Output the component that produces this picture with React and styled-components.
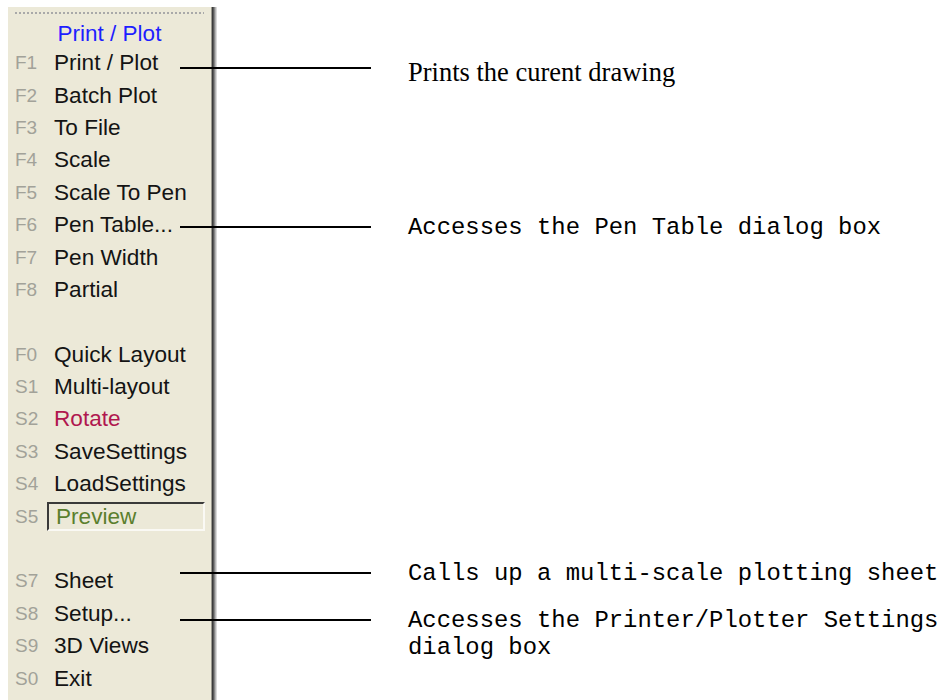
import React from 'react';
import styled, { createGlobalStyle } from 'styled-components';

const GlobalStyle = createGlobalStyle`
  html, body {
    margin: 0;
    padding: 0;
    background: #ffffff;
  }
`;

const Page = styled.div`
  position: relative;
  box-sizing: border-box;
  width: 940px;
  height: 700px;
  padding: 7px 0 0 8px;
  display: flex;
  flex-direction: column;
  overflow: hidden;
  background: #ffffff;
`;

const Panel = styled.div`
  flex: 1;
  width: 203px;
  padding-top: 5px;
  background: #ece9d8;
  border-right: 1px solid #9c9a90;
  box-shadow: 1px 0 0 #3c3c3c, 2px 0 0 #5a5a5a, 3px 0 0 #868686,
    4px 0 0 #b4b4b4, 5px 0 0 #dadada;
  font-family: "Liberation Sans", Arial, sans-serif;
`;

const Grip = styled.div`
  margin: 0 7px;
  height: 2px;
  background: repeating-linear-gradient(90deg, #a9a9a9 0 2px, transparent 2px 4px);
`;

const Title = styled.div`
  height: 27px;
  margin-top: 6px;
  display: flex;
  align-items: center;
  justify-content: center;
  font-size: 22.5px;
  color: #1e1eff;
`;

const Row = styled.div`
  height: 32.4px;
  display: flex;
  align-items: center;
  padding-left: 7px;
`;

const Key = styled.span`
  width: 39px;
  flex: none;
  font-size: 19px;
  color: #a2a299;
`;

const Label = styled.span`
  font-size: 22.6px;
  color: ${(p) => p.color || '#141414'};
  white-space: nowrap;
`;

const Boxed = styled.span`
  margin-left: -7px;
  width: 158px;
  height: 29px;
  box-sizing: border-box;
  display: flex;
  align-items: center;
  padding-left: 7px;
  border-top: 2px solid #3a3a3a;
  border-left: 2px solid #3a3a3a;
  border-bottom: 2px solid #faf9f4;
  border-right: 2px solid #faf9f4;
  font-size: 22.6px;
  color: #5b7f2e;
`;

const Callout = styled.div`
  position: absolute;
  left: 180px;
  top: ${(p) => p.top}px;
  display: flex;
  align-items: flex-start;
  gap: 37px;
  z-index: 2;
`;

const Line = styled.div`
  width: 191px;
  height: 2px;
  margin-top: ${(p) => p.offset}px;
  background: #000000;
  flex: none;
`;

const SerifNote = styled.div`
  font-family: "Liberation Serif", "Times New Roman", serif;
  font-size: 26.5px;
  line-height: 30px;
  color: #000000;
  white-space: nowrap;
`;

const MonoNote = styled.div`
  font-family: "Liberation Mono", "Courier New", monospace;
  font-size: 23.9px;
  line-height: 27px;
  color: #000000;
  white-space: pre;
`;

const items = [
  { key: 'F1', label: 'Print / Plot' },
  { key: 'F2', label: 'Batch Plot' },
  { key: 'F3', label: 'To File' },
  { key: 'F4', label: 'Scale' },
  { key: 'F5', label: 'Scale To Pen' },
  { key: 'F6', label: 'Pen Table...' },
  { key: 'F7', label: 'Pen Width' },
  { key: 'F8', label: 'Partial' },
  null,
  { key: 'F0', label: 'Quick Layout' },
  { key: 'S1', label: 'Multi-layout' },
  { key: 'S2', label: 'Rotate', color: '#b0174f' },
  { key: 'S3', label: 'SaveSettings' },
  { key: 'S4', label: 'LoadSettings' },
  { key: 'S5', label: 'Preview', boxed: true },
  null,
  { key: 'S7', label: 'Sheet' },
  { key: 'S8', label: 'Setup...' },
  { key: 'S9', label: '3D Views' },
  { key: 'S0', label: 'Exit' },
];

export default function App() {
  return (
    <Page>
      <GlobalStyle />
      <Panel>
        <Grip />
        <Title>Print / Plot</Title>
        {items.map((item, i) =>
          item ? (
            <Row key={i}>
              <Key>{item.key}</Key>
              {item.boxed ? (
                <Boxed>{item.label}</Boxed>
              ) : (
                <Label color={item.color}>{item.label}</Label>
              )}
            </Row>
          ) : (
            <Row key={i} />
          )
        )}
      </Panel>

      <Callout top={57}>
        <Line offset={10} />
        <SerifNote>Prints the curent drawing</SerifNote>
      </Callout>
      <Callout top={214}>
        <Line offset={12} />
        <MonoNote>Accesses the Pen Table dialog box</MonoNote>
      </Callout>
      <Callout top={560}>
        <Line offset={12} />
        <MonoNote>Calls up a multi-scale plotting sheet</MonoNote>
      </Callout>
      <Callout top={607}>
        <Line offset={12} />
        <MonoNote>{'Accesses the Printer/Plotter Settings\ndialog box'}</MonoNote>
      </Callout>
    </Page>
  );
}
